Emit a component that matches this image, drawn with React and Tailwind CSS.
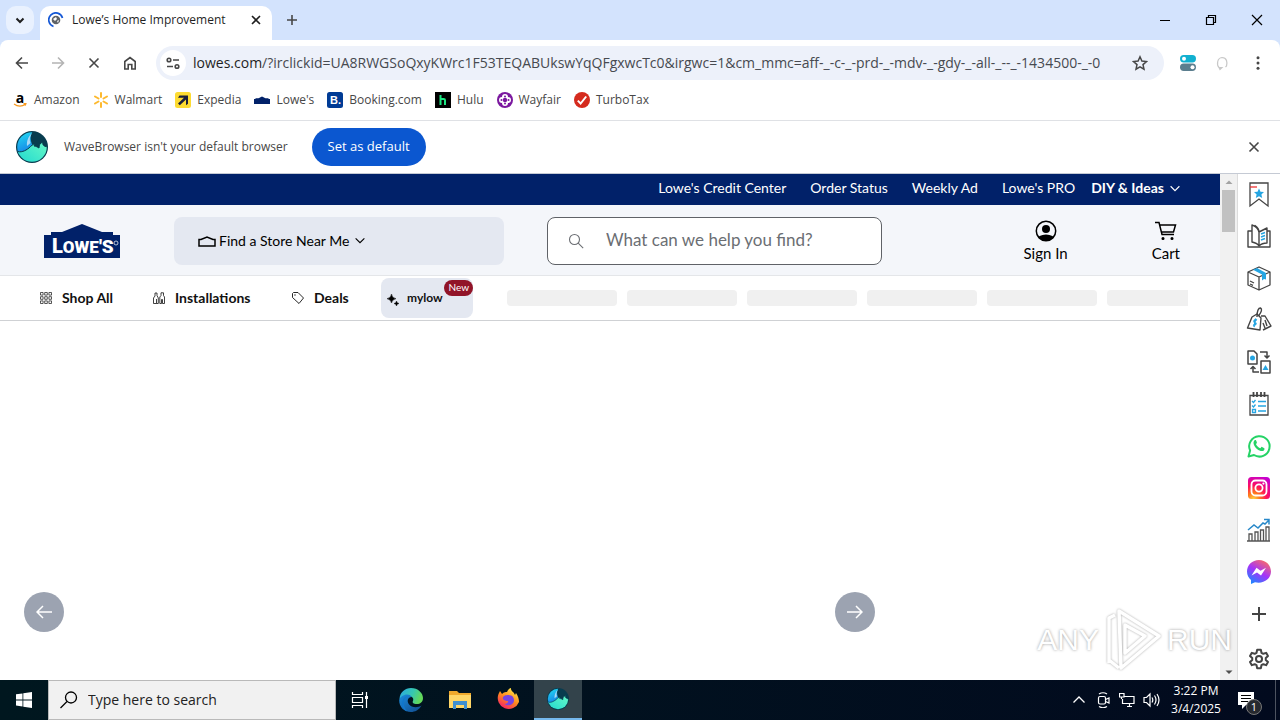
import React from "react";

const bookmarks = [
  { label: "Amazon", icon: AmazonIcon },
  { label: "Walmart", icon: WalmartIcon },
  { label: "Expedia", icon: ExpediaIcon },
  { label: "Lowe's", icon: LowesMini },
  { label: "Booking.com", icon: BookingIcon },
  { label: "Hulu", icon: HuluIcon },
  { label: "Wayfair", icon: WayfairIcon },
  { label: "TurboTax", icon: TurboTaxIcon },
];

function AmazonIcon() {
  return (
    <svg viewBox="0 0 16 16" className="size-4 overflow-visible">
      <text x="8" y="11" textAnchor="middle" fontSize="14" fontWeight="700" fontFamily="Open Sans, sans-serif">a</text>
      <path d="M2 12c3.500 2.600 8 2.600 11.500.3M11.500 11.700l2.400-.1-.7 2" fill="none" stroke="#f7981d" strokeWidth="1.200" />
    </svg>
  );
}
function WalmartIcon() {
  return (
    <svg viewBox="0 0 16 16" className="size-4" stroke="#fdb92e" strokeWidth="2" strokeLinecap="round">
      <path d="M8 1v4M8 11v4M2 4.500l3.500 2M10.500 9.500l3.500 2M2 11.500l3.500-2M10.500 6.500l3.500-2" />
    </svg>
  );
}
function ExpediaIcon() {
  return (
    <svg viewBox="0 0 16 16" className="size-4">
      <rect width="16" height="16" rx="2.500" fill="#fddb32" />
      <path d="M4.500 3.500H13v8.300l-2 1.500V7.400L4.800 13.300 3 11.500l6-5.700H3z" fill="#191e3b" />
    </svg>
  );
}
function LowesMini() {
  return (
    <svg viewBox="0 0 16 16" className="size-4">
      <path d="M0 7h1.500v-.8h3L8 4.500l3.500 1.700h3V7H16v5H0z" fill="#012169" />
    </svg>
  );
}
function BookingIcon() {
  return (
    <svg viewBox="0 0 16 16" className="size-4">
      <rect width="16" height="16" rx="2.500" fill="#003b95" />
      <text x="3" y="12" fontSize="11" fontWeight="700" fill="#fff" fontFamily="Liberation Sans, sans-serif">B.</text>
    </svg>
  );
}
function HuluIcon() {
  return (
    <svg viewBox="0 0 16 16" className="size-4">
      <rect width="16" height="16" fill="#000" />
      <path d="M5.500 3v10M5.500 8q0-1 1-1h2.200q1.300 0 1.300 1.300V13" fill="none" stroke="#1ce783" strokeWidth="2" />
    </svg>
  );
}
function WayfairIcon() {
  return (
    <svg viewBox="0 0 16 16" className="size-4">
      <circle cx="8" cy="8" r="8" fill="#7b189f" />
      <path d="M6 6V5a2 2 0 0 1 4 0v1h1a2 2 0 0 1 0 4h-1v1a2 2 0 0 1-4 0v-1H5a2 2 0 0 1 0-4z" fill="#fff" stroke="#fff" strokeWidth="2" />
      <g fill="#7b189f">
        <circle cx="8" cy="8" r="2.200" />
        <circle cx="8" cy="4.500" r="1" /><circle cx="8" cy="11.500" r="1" /><circle cx="4.500" cy="8" r="1" /><circle cx="11.500" cy="8" r="1" />
      </g>
    </svg>
  );
}
function TurboTaxIcon() {
  return (
    <svg viewBox="0 0 16 16" className="size-4">
      <circle cx="8" cy="8" r="8" fill="#d52b1e" />
      <path d="M3.800 8.600l2.800 2.900 5.600-7" fill="none" stroke="#fff" strokeWidth="2" />
    </svg>
  );
}

function WaveLogo({ className }) {
  return (
    <svg viewBox="0 0 32 32" className={className}>
      <defs>
        <linearGradient id="wave-l" x1=".3" y1="0" x2=".6" y2="1">
          <stop offset="0" stopColor="#22ddf2" />
          <stop offset="1" stopColor="#1579e6" />
        </linearGradient>
        <linearGradient id="wave-r" x1="0" y1="1" x2="1" y2=".2">
          <stop offset="0" stopColor="#1bd6d2" />
          <stop offset="1" stopColor="#62f7c6" />
        </linearGradient>
        <clipPath id="wave-c"><circle cx="16" cy="16" r="14.800" /></clipPath>
      </defs>
      <circle cx="16" cy="16" r="16" fill="#083c4f" />
      <g clipPath="url(#wave-c)">
        <path d="M0 0h17c-2 3-3 6-2 10 .5 2 1 4 3 5L6 24l-6-2z" fill="url(#wave-l)" />
        <path d="M16 2c-2 3-3 7-1.500 10L11 15c-.5-5 1-9 5-13z" fill="#a9d8f5" />
        <path d="M0 20c5 2 9 0 13-3 2-2 4-4 6-4l-1 2c2 0 3 1 5 2 0-3 1-5 4-6-1 3 1 5 7 5v18H0z" fill="url(#wave-r)" />
        <path d="M0 20c5 2 9 0 13-3 2-2 4-4 6-4l-1 2c2 0 3 1 5 2 0-3 1-5 4-6-1 3 1 5 7 5" fill="none" stroke="#083c4f" strokeWidth="1" />
      </g>
    </svg>
  );
}

const sidebar = [
  {
    label: "Bookmarks",
    art: (
      <g fill="none" stroke="#444" strokeWidth="1.300">
        <path d="M3 1h18v23l-9-7-9 7z" />
        <path d="M3 5h7" stroke="#e33" />
        <path d="M12 6.500l1.500 3.200 3.500.4-2.600 2.300.8 3.500-3.200-1.700-3.200 1.700.8-3.500L7 10.100l3.500-.4z" fill="#25a5e2" stroke="none" />
      </g>
    ),
  },
  {
    label: "Reading",
    art: (
      <g fill="none" stroke="#444" strokeWidth="1.400" strokeLinejoin="round">
        <path d="M12 22c-1-2-3-3-7-4V1c3 1 6 3 7 7zM12 22V8l8-4v15c-4 0-6 1-8 3" />
        <path d="M5 7H1v16h22V7h-3M8 3V1.500c3 2 4 4 4 6.500" />
        <path d="M14 10l4-1.500M14 13l4-1.500M14 16l4-1.500" stroke="#25a5e2" />
      </g>
    ),
  },
  {
    label: "Packages",
    art: (
      <g fill="none" stroke="#444" strokeWidth="1.300" strokeLinejoin="round">
        <path d="M12 1l11 5v13l-11 5L1 19V6zM1 6l11 5 11-5M12 11v13M3 15l4 2M3 18l3 1.300" />
        <path d="M6 3.800L15 8.500v6l2-1.500 2 .5V7L10 2z" fill="#25a5e2" stroke="none" />
      </g>
    ),
  },
  {
    label: "Coupons",
    art: (
      <g fill="none" stroke="#444" strokeWidth="1.400" strokeLinejoin="round">
        <path d="M5 9l5-3 4 4-1 12-12.500-2zM14 8l4 0 6 10-8 4M18 12l2 6M16 15l2 5" />
        <path d="M10 9c0-5 1-9 3.500-9 2 1 1 4-2 8" />
        <path d="M10 12c-3-1-4 2-2 2.600s1 3-2 2.400M8.700 10.500L7 19" stroke="#25a5e2" />
      </g>
    ),
  },
  {
    label: "Convert",
    art: (
      <g fill="none" stroke="#444" strokeWidth="1.500" strokeLinejoin="round">
        <path d="M1 1h6l3 3v10H1zM14 11h9v12h-9z" />
        <path d="M13 2h7v6M17.500 5.500L20 8l2.500-2.500M12 22H6v-5M3.500 19L6 16.500 8.500 19" />
        <circle cx="5.500" cy="8" r="2.500" fill="#25a5e2" stroke="none" />
        <path d="M18.500 15l3 5h-6z" fill="#25a5e2" stroke="none" />
      </g>
    ),
  },
  {
    label: "Tasks",
    art: (
      <g fill="none" stroke="#444" strokeWidth="1.300">
        <path d="M3 3.500h18V23H3z" />
        <path d="M6.500 0v5M10 0v5M14 0v5M17.500 0v5" strokeWidth="1.800" />
        <path d="M5 9l1.500 1.500L8.500 8M5 13.500L6.500 15l2-2.500M5.500 17.500h3v3h-3zM11 9.500h8M11 14h8M11 19h8" stroke="#25a5e2" />
      </g>
    ),
  },
  {
    label: "WhatsApp",
    art: (
      <g>
        <path d="M1.500 22.500l1.600-6A10.200 10.200 0 1 1 7 21z" fill="none" stroke="#25d366" strokeWidth="2" strokeLinejoin="round" />
        <path d="M8 6c-3 2-1 6.500 2 9s6.800 3 7.500.3c.3-1.200-.2-1.300-2.400-2.400-1-.4-1.200 1.500-2 1.300-1.800-.7-3.300-2.300-4-3.700-.3-.7 1-1.300.8-2-.8-2.500-1-2.700-1.900-2.500z" fill="#25d366" />
      </g>
    ),
  },
  {
    label: "Instagram",
    art: (
      <g>
        <defs>
          <radialGradient id="insta" cx=".25" cy="1" r="1.100">
            <stop offset="0" stopColor="#ffd445" />
            <stop offset=".25" stopColor="#ff7a1c" />
            <stop offset=".55" stopColor="#ff0f5b" />
            <stop offset="1" stopColor="#c600d0" />
          </radialGradient>
        </defs>
        <rect x="1" y="1" width="22" height="22" rx="3.500" fill="url(#insta)" />
        <g fill="none" stroke="#fff" strokeWidth="1.800">
          <rect x="4.500" y="4.500" width="15" height="15" rx="4" />
          <circle cx="12" cy="12" r="3.600" />
        </g>
        <circle cx="16.400" cy="7.600" r="1.100" fill="#fff" />
      </g>
    ),
  },
  {
    label: "Stocks",
    art: (
      <g fill="none" stroke="#555" strokeWidth="1.300">
        <path d="M0 23h23M2 23v-7h3v7M8 23v-9h3v9M13.500 23V12h3v11M19 23V9h3v14" />
        <path d="M1 12l6-5 4 3 5-5 2 1 4-4M17 1.500h5v5" stroke="#2788c9" strokeWidth="1.500" />
      </g>
    ),
  },
  {
    label: "Messenger",
    art: (
      <g>
        <defs>
          <linearGradient id="msgr" x1=".2" y1="1" x2=".8" y2="0">
            <stop offset="0" stopColor="#168aff" />
            <stop offset=".5" stopColor="#a334fa" />
            <stop offset="1" stopColor="#ff6d60" />
          </linearGradient>
        </defs>
        <path d="M12 0C5.200 0 0 5 0 11.500c0 3.500 1.500 6.500 4 8.500v4l4-1.800c8 2 16-3 16-10.700C24 5 18.800 0 12 0z" fill="url(#msgr)" />
        <path d="M4.500 15.500L9.500 7.800l4 3 5.500-3-5 7.700-4-3z" fill="#fff" />
      </g>
    ),
  },
  {
    label: "Add",
    art: <path d="M12 5v14M5 12h14" fill="none" stroke="#444" strokeWidth="2" />,
  },
];

function Icon({ className = "size-4", children, vb = "0 0 16 16", w = 1.5 }) {
  return (
    <svg viewBox={vb} className={className} fill="none" stroke="currentColor" strokeWidth={w}>
      {children}
    </svg>
  );
}

function TabStrip() {
  return (
    <header className="flex h-10 shrink-0 items-end bg-[#d3e3fd] text-[#1f1f1f]">
      <div className="flex h-10 w-10 items-center pl-1.5">
        <button aria-label="Search tabs" className="flex size-7 items-center justify-center rounded-[10px] bg-[#e9f1fe]">
          <Icon w={2}><path d="M4.500 6.500L8 10l3.500-3.500" /></Icon>
        </button>
      </div>
      <div className="flex h-[34px] w-58 items-center rounded-t-[10px] bg-white pr-2 pb-1.5 pl-2">
        <svg viewBox="0 0 16 16" className="size-4" fill="none">
          <path d="M5.500 14.500A7 7 0 1 1 14.500 6" stroke="#1558d6" strokeWidth="1.700" />
          <circle cx="8" cy="8" r="4.300" fill="#5f6368" />
          <path d="M5 7l3-2 1 2-2 2zM9 9l2-1-1 3z" fill="#fff" />
        </svg>
        <span className="ml-2 flex-1 text-xs whitespace-nowrap">Lowe’s Home Improvement</span>
        <button aria-label="Close tab"><Icon w={1.600}><path d="M4 4l8 8M12 4l-8 8" /></Icon></button>
      </div>
      <button aria-label="New tab" className="ml-3 flex h-10 items-center text-[#474747]"><Icon w={1.600}><path d="M8 3v10M3 8h10" /></Icon></button>
      <div className="ml-auto flex h-10 items-center gap-[30px] pr-[15px] text-black">
        <button aria-label="Minimize"><Icon w={1}><path d="M3 8.500h10" /></Icon></button>
        <button aria-label="Restore"><Icon w={1.200}><path d="M3.500 5.500h7v7h-7zM5.500 5.500v-2h7v7h-2" /></Icon></button>
        <button aria-label="Close"><Icon w={1.200}><path d="M3 3l10 10M13 3L3 13" /></Icon></button>
      </div>
    </header>
  );
}

function Toolbar() {
  return (
    <div className="bg-[#d3e3fd]">
      <div className="flex h-[46px] items-center rounded-t-lg bg-white pr-3.5 pl-3.5 text-[#474747]">
        <div className="flex w-[142px] gap-5">
          <button aria-label="Back"><Icon w={1.600}><path d="M14 8H3M8 2.500L2.500 8 8 13.500" /></Icon></button>
          <button aria-label="Forward" className="text-[#b4b4b4]"><Icon w={1.600}><path d="M2 8h11M8 2.500L13.500 8 8 13.500" /></Icon></button>
          <button aria-label="Stop"><Icon w={1.600}><path d="M3.500 3.500l9 9M12.500 3.500l-9 9" /></Icon></button>
          <button aria-label="Home"><Icon w={1.600}><path d="M2.800 14V6.500L8 2.500l5.200 4V14H9.800V9.500H6.200V14z" /></Icon></button>
        </div>
        <div className="flex h-[34px] flex-1 items-center rounded-full bg-[#edf1fa] pr-4 pl-1">
          <button aria-label="Site information" className="flex size-[26px] items-center justify-center rounded-full bg-white">
            <Icon w={1.600}><circle cx="4" cy="5" r="1.800" /><path d="M8 5h6M2 11.500h6" /><circle cx="12" cy="11.500" r="1.800" /></Icon>
          </button>
          <div role="textbox" aria-label="Address" className="ml-[7px] flex-1 text-sm whitespace-nowrap text-[#474a50]">
            <span className="text-[#1f1f1f]">lowes.com</span>/?irclickid=UA8RWGSoQxyKWrc1F53TEQABUkswYqQFgxwcTc0&amp;irgwc=1&amp;cm_mmc=aff-_-c-_-prd-_-mdv-_-gdy-_-all-_--_-1434500-_-0
          </div>
          <button aria-label="Bookmark this page"><Icon w={1.500}><path d="M8 1.800l1.900 4.200 4.600.5L11 9.600l1 4.600-4-2.400-4 2.400 1-4.600L1.500 6.500 6.100 6z" /></Icon></button>
        </div>
        <div className="ml-4 flex items-center gap-[18px]">
          <button aria-label="Settings extension">
            <svg viewBox="0 0 16 16" className="size-4">
              <rect width="16" height="7.500" rx="3.700" fill="#12b0d0" /><circle cx="4" cy="3.700" r="2" fill="#fff" />
              <rect y="8.500" width="16" height="7.500" rx="3.700" fill="#5b7e8e" /><circle cx="12.500" cy="12.200" r="2" fill="#fff" />
            </svg>
          </button>
          <button aria-label="Profile" className="text-[#c8c8c8]"><Icon w={1.200}><path d="M5 12.500C2.500 10 3 3 8 2.500c5 0 5.500 5 4.500 8.500l-1 1M5 12.500h3l-2 2z" /></Icon></button>
          <button aria-label="Menu" className="ml-0.5">
            <svg viewBox="0 0 16 16" className="size-4" fill="#474747"><circle cx="8" cy="2.700" r="1.500" /><circle cx="8" cy="8" r="1.500" /><circle cx="8" cy="13.300" r="1.500" /></svg>
          </button>
        </div>
      </div>
    </div>
  );
}

function StoreHeader() {
  return (
    <>
      <nav className="flex h-[31px] items-center justify-end gap-6 bg-[#012169] pr-[38px] pb-[3px] text-sm whitespace-nowrap text-white">
        <a href="#credit">Lowe's Credit Center</a>
        <a href="#orders">Order Status</a>
        <a href="#ad">Weekly Ad</a>
        <div className="flex gap-4">
          <a href="#pro">Lowe's PRO</a>
          <button className="flex items-center gap-1 font-bold">DIY &amp; Ideas
            <Icon className="size-3.5" w={1.300}><path d="M3 6l5 5 5-5" /></Icon>
          </button>
        </div>
      </nav>
      <div className="flex h-[71px] items-center border-b border-[#e4e6e9] bg-[#f4f6fa] pt-px pr-10 pl-11 text-sm text-black">
        <a href="#home" aria-label="Lowe's">
          <svg viewBox="0 0 76 34" className="h-[34px] w-[76px]">
            <path d="M0 11h7V8h11L38 0l20 8h11v3h7v23H0z" fill="#012169" />
            <text x="8" y="29" fontSize="17" fill="#fff" fontFamily="Roboto, sans-serif" fontWeight="900">
              <tspan fontSize="20">L</tspan>OWE<tspan fontSize="19">'S</tspan>
            </text>
            <circle cx="72" cy="19" r="2" fill="none" stroke="#fff" strokeWidth=".7" />
          </svg>
        </a>
        <button className="ml-[54px] flex h-12 w-[330px] items-center rounded-lg bg-[#e4e8f1] pl-[23px]">
          <Icon className="h-4 w-5" vb="0 0 20 16" w={1.500}><path d="M2 13V6.500h2L10 4l6 2.500h2V13z" /></Icon>
          <span className="ml-0.5">Find a Store Near Me</span>
          <Icon className="ml-1 size-3.5" w={1.300}><path d="M3 5l5 5 5-5" /></Icon>
        </button>
        <label className="ml-[43px] flex h-12 w-[335px] items-center rounded-lg border border-[#5f6267] bg-white pl-5 text-[#6b6e73]">
          <Icon w={1.100}><circle cx="6.500" cy="6.500" r="5" /><path d="M10.200 10.200l5 5" /></Icon>
          <input type="search" aria-label="Search" placeholder="What can we help you find?" className="ml-[22px] w-60 bg-transparent text-[17px] outline-none placeholder:text-[#6b6e73]" />
        </label>
        <button className="ml-auto flex flex-col items-center pt-0.5 text-[15px] leading-[22px]">
          <svg viewBox="0 0 22 22" className="size-[22px]">
            <defs><clipPath id="acct"><circle cx="11" cy="11" r="10" /></clipPath></defs>
            <circle cx="11" cy="11" r="9.700" fill="none" stroke="#000" strokeWidth="1.500" />
            <circle cx="11" cy="9" r="4" /><ellipse cx="11" cy="20" rx="9" ry="5.500" clipPath="url(#acct)" />
          </svg>
          Sign In
        </button>
        <button className="ml-21 flex flex-col items-center pt-0.5 text-[15px] leading-[22px]">
          <Icon className="size-[22px]" vb="0 0 22 22" w={1.500}><path d="M0 2.500h4l3 12h12M4.500 5h16l-2 7H6.500" /><circle cx="8" cy="18.500" r=".8" fill="currentColor" /><circle cx="17" cy="18.500" r=".8" fill="currentColor" /></Icon>
          Cart
        </button>
      </div>
      <nav className="flex h-[45px] items-center border-b border-[#cfd1d4] pr-8 pl-10 text-sm font-bold whitespace-nowrap text-[#111]">
        <a href="#shop" className="flex w-[113px] items-center gap-2.5">
          <Icon className="size-3" vb="0 0 12 12">
            <path d="M.5.500h2.600v2.600H.5zM4.700.500h2.600v2.600H4.700zM8.900.500h2.600v2.600H8.900zM.5 4.700h2.600v2.600H.5zM4.700 4.700h2.600v2.600H4.700zM8.900 4.700h2.600v2.600H8.900zM.5 8.900h2.600v2.600H.5zM4.700 8.900h2.600v2.600H4.700zM8.900 8.900h2.600v2.600H8.900z" strokeWidth=".7" />
          </Icon>Shop All
        </a>
        <a href="#install" className="flex w-[139px] items-center gap-2.5">
          <Icon className="size-3" vb="0 0 12 12" w={0.8}><path d="M.5 11.500V6L2 4V1h2v2.500L5.300 6v5.500zM6.800 11.500V5L8 3.500V.8h2.500V3.500L11.500 5v6.500H9.500V7.500h-1v4zM3.500 7v4" /></Icon>Installations
        </a>
        <a href="#deals" className="flex w-[89px] items-center gap-2.5">
          <Icon className="size-3" vb="0 0 12 12" w={0.9}><path d="M.5 1.500l1-1h4.500l5.500 5.500-4.500 5.500L.5 5.500z" strokeLinejoin="round" /><circle cx="3" cy="3" r=".3" /></Icon>Deals
        </a>
        <a href="#mylow" className="relative flex h-10 w-[92px] items-center rounded-lg bg-[#e4e8f1] pl-1.5 text-xs">
          <svg viewBox="0 0 12 12" className="mt-1 size-3"><path d="M4.500 0Q5 4 9 4.700 5 5.500 4.500 9 4 5.500 0 4.700 4 4 4.500 0zM9.500 7Q9.700 9.200 12 9.500 9.700 9.800 9.500 12 9.300 9.800 7 9.500 9.300 9.200 9.500 7z" stroke="#111" strokeWidth=".5" /></svg>
          <span className="ml-2">mylow</span>
          <span className="absolute top-0.5 right-0 flex h-4 items-center rounded-full bg-[#911428] px-1 text-[10px] font-normal text-white">New</span>
        </a>
        <div aria-hidden="true" className="ml-[34px] flex flex-1 gap-2.5 overflow-hidden">
          {[0, 1, 2, 3, 4, 5].map((n) => (
            <div key={n} className="h-4 w-[110px] shrink-0 rounded-sm bg-[#f0f0f0]" />
          ))}
        </div>
      </nav>
    </>
  );
}

function Watermark() {
  return (
    <div aria-hidden="true" className="pointer-events-none absolute right-12 bottom-2 flex items-center gap-1.5 font-['Liberation_Sans',sans-serif] text-[30px] leading-none text-white [text-shadow:0_0_3px_#999]">
      <span>ANY</span>
      <svg viewBox="0 0 56 64" className="h-16 w-14 drop-shadow-[0_0_1px_#aaa]" fill="none" stroke="#fff" strokeWidth="3.500" strokeLinejoin="round">
        <path d="M14 3l40 25-38 32zM20 17l20 11-20 17zM4 55V10l6-3M4 52l10 8" />
      </svg>
      <span>RUN</span>
    </div>
  );
}

function Sidebar() {
  return (
    <aside className="flex w-[43px] shrink-0 flex-col items-center gap-[18px] border-l border-[#dcdcdc] bg-white pt-2">
      {sidebar.map((s) => (
        <button key={s.label} aria-label={s.label}><svg viewBox="0 0 24 24" className="size-6 overflow-visible">{s.art}</svg></button>
      ))}
      <button aria-label="Settings" className="mt-auto pb-2.5 text-[#444]">
        <Icon className="size-[22px]" vb="0 0 24 24" w={2.200}>
          <path d="M10 2h4l.7 3.200 2 1.100 3.100-1 2 3.500-2.400 2.200v2l2.400 2.200-2 3.500-3.100-1-2 1.100L14 22h-4l-.7-3.200-2-1.100-3.100 1-2-3.500L4.600 13v-2L2.200 8.800l2-3.500 3.100 1 2-1.100z" strokeLinejoin="round" />
          <circle cx="12" cy="12" r="3.300" />
        </Icon>
      </button>
    </aside>
  );
}

function Taskbar() {
  return (
    <footer className="flex h-10 shrink-0 items-center bg-linear-to-r from-[#00171f] to-[#020a1e] text-white">
      <button aria-label="Start" className="flex w-12 justify-center">
        <svg viewBox="0 0 16 16" className="size-4" fill="#fff"><path d="M0 2.300L6.500 1.400V7.500H0zM7.300 1.300L16 0v7.500H7.300zM0 8.400h6.500v6.100L0 13.600zM7.300 8.400H16V16l-8.700-1.300z" /></svg>
      </button>
      <label className="flex h-10 w-72 items-center border border-[#b9b9b9] bg-[#f1f1f1] pl-[11px] text-black">
        <Icon className="size-[18px]" vb="0 0 18 18" w={1.300}><circle cx="11" cy="6.500" r="5.500" /><path d="M7 10.500L.5 17" /></Icon>
        <input aria-label="Type here to search" placeholder="Type here to search" className="ml-2.5 w-56 bg-transparent text-sm outline-none placeholder:text-[#222]" />
      </label>
      <button aria-label="Task view" className="flex h-10 w-12 items-center justify-center">
        <Icon className="size-[18px]" vb="0 0 18 18" w={1.200}><path d="M1.500 1v2.500h10V1M1.500 6.500h10v5h-10zM1.500 17v-2.500h10V17M15.500 1v16" /><rect x="14" y="5" width="3" height="3" fill="#fff" stroke="none" /></Icon>
      </button>
      <button aria-label="Edge" className="flex h-10 w-[54px] items-center justify-center">
        <svg viewBox="0 0 24 24" className="size-6">
          <defs>
            <linearGradient id="edge-a" x1="0" y1="0" x2="1" y2=".3"><stop offset="0" stopColor="#2aa8e8" /><stop offset=".6" stopColor="#36c7b0" /><stop offset="1" stopColor="#63d85a" /></linearGradient>
            <linearGradient id="edge-b" x1="0" y1="0" x2="1" y2="1"><stop offset="0" stopColor="#1b8de0" /><stop offset="1" stopColor="#114a8b" /></linearGradient>
          </defs>
          <path d="M.5 11C1 4 6 0 12 0c7 0 12 5 12 10 0 4-3 6-6 6-4 0-5-1.500-4-3 2-5-7-7-13.500-2z" fill="url(#edge-a)" />
          <path d="M.2 12c1-5 10-8 12.500-3-4 0-5 4-3 7 3 4 9 4 12.800 1.500C20 22 16 24 12 24 5 24 0 19 .2 12z" fill="url(#edge-b)" />
          <path d="M9 8c-5 2-6 9-1 15.500C4 22 2 17 3.500 13 4.500 10 6.500 8.500 9 8z" fill="#1177cd" />
        </svg>
      </button>
      <button aria-label="File Explorer" className="flex h-10 w-11 items-center justify-center">
        <svg viewBox="0 0 22 20" className="h-5 w-[22px]">
          <path d="M0 1h8l2 2h12v15H0z" fill="#f0a92c" /><path d="M0 5h22v13H0z" fill="#ffd667" />
          <path d="M4 11h14v8h-3v-4H7v4H4z" fill="#3f8fd0" />
        </svg>
      </button>
      <button aria-label="Firefox" className="flex h-10 w-13 items-center justify-center">
        <svg viewBox="0 0 24 24" className="size-6">
          <defs><linearGradient id="ff" x1=".8" y1="0" x2=".2" y2="1"><stop offset="0" stopColor="#fff04a" /><stop offset=".5" stopColor="#ff8a1e" /><stop offset="1" stopColor="#f5156c" /></linearGradient></defs>
          <path d="M2.500 6L4 3l2 3c2-2 4-2 5-2 1-2 2-3.500 4-4-.5 3 3 4 4 7l1-2c2 3 3 6 3 9A11 11 0 1 1 2.500 6z" fill="url(#ff)" />
          <path d="M7 11c-1-3 3-4 5-4 5 0 6 3 6 5.500 0 4-6 6.500-9.500 3.500 3 0 4-2 3.500-3-2 0-4-.5-5-2z" fill="#7543e3" />
        </svg>
      </button>
      <button aria-label="WaveBrowser" className="flex h-10 w-12 items-center justify-center border-b-2 border-[#76b9ed] bg-[#33434b]">
        <WaveLogo className="size-[22px]" />
      </button>
      <div className="ml-auto flex items-center gap-2">
        <Icon w={1.300}><path d="M2.500 10.500L8 5l5.500 5.500" /></Icon>
        <Icon w={1.200}><rect x="3.500" y="4.500" width="7" height="7.500" rx="1.500" /><path d="M10.500 7.500L14 6v5l-3.500-1.500M4 2q4-2.500 8 0M4 14.500q4 2.500 8 0" /></Icon>
        <Icon w={1.200}><path d="M5.500 4.500H15v7H3.500V7M8 14.500h5M10.500 12v2.500M.5 1.500H5V5H.5zM2.500 5v2" /></Icon>
        <Icon className="h-4 w-[18px]" vb="0 0 18 16" w={1.200}><path d="M1 5.500h2.500L7 2v12l-3.500-3.500H1zM9 5.500q1.600 2.500 0 5M11.500 3.500q3 4.500 0 9M14 2q4 6 0 12" /></Icon>
      </div>
      <time className="w-[70px] text-center text-xs leading-[18px] whitespace-nowrap">3:22 PM<br />3/4/2025</time>
      <button aria-label="1 notification" className="mr-3 ml-1.5 flex items-center pt-1.5">
        <svg viewBox="0 0 26 26" className="size-[26px]">
          <path d="M1 2h16v13H9l-4 4v-4H1z" fill="#fff" /><path d="M4 5.500h10M4 8.500h10M4 11.500h7" stroke="#000" strokeWidth="1.200" />
          <circle cx="17" cy="17" r="7.500" fill="#26292f" stroke="#777" /><text x="17" y="21" textAnchor="middle" fontSize="11" fill="#fff" fontFamily="Open Sans, sans-serif">1</text>
        </svg>
      </button>
      <div className="h-10 w-[5px] border-l border-[#4d5360]" />
    </footer>
  );
}

export default function App() {
  return (
    <div className="flex h-screen flex-col bg-white font-['Open_Sans',sans-serif]">
      <TabStrip />
      <Toolbar />
      <nav aria-label="Bookmarks" className="flex h-[35px] shrink-0 items-center gap-[13px] border-b border-[#dfe1e5] pb-1.5 pl-3 text-xs text-[#474747]">
        {bookmarks.map(({ label, icon: Mark }) => (
          <a key={label} href={"#" + label} className="flex items-center gap-1.5"><Mark />{label}</a>
        ))}
      </nav>
      <div className="flex h-[53px] shrink-0 items-center border-b border-[#c5cad4] px-4 text-[13px] text-[#474747]">
        <WaveLogo className="size-8" />
        <span className="ml-4 text-xs">WaveBrowser isn't your default browser</span>
        <button className="ml-6 h-[38px] rounded-full bg-[#0b57d0] px-4 text-white">Set as default</button>
        <button aria-label="Dismiss" className="mr-0.5 ml-auto"><Icon w={1.600}><path d="M3.500 3.500l9 9M12.500 3.500l-9 9" /></Icon></button>
      </div>
      <div className="relative flex min-h-0 flex-1">
        <main className="flex min-w-0 flex-1 flex-col font-[Lato,sans-serif]">
          <StoreHeader />
          <section aria-label="Featured" className="flex w-[899px] max-w-full flex-1 items-end justify-between px-6 pb-12 text-white">
            <button aria-label="Previous" className="flex size-10 items-center justify-center rounded-full bg-[#9ca3b1]"><Icon w={1.500}><path d="M16 8H1M7 2L1 8l6 6" /></Icon></button>
            <button aria-label="Next" className="flex size-10 items-center justify-center rounded-full bg-[#9ca3b1]"><Icon w={1.500}><path d="M0 8h15M9 2l6 6-6 6" /></Icon></button>
          </section>
        </main>
        <div aria-hidden="true" className="flex w-[17px] shrink-0 flex-col items-center bg-[#f1f1f1]">
          <svg viewBox="0 0 16 16" className="size-4"><path d="M4.500 10L8 6.500l3.500 3.500z" fill="#a3a3a3" /></svg>
          <div className="h-[42px] w-[13px] bg-[#c1c1c1]" />
          <svg viewBox="0 0 16 16" className="mt-auto size-4"><path d="M4.500 6.500L8 10l3.500-3.500z" fill="#505050" /></svg>
        </div>
        <Sidebar />
        <Watermark />
      </div>
      <Taskbar />
    </div>
  );
}
